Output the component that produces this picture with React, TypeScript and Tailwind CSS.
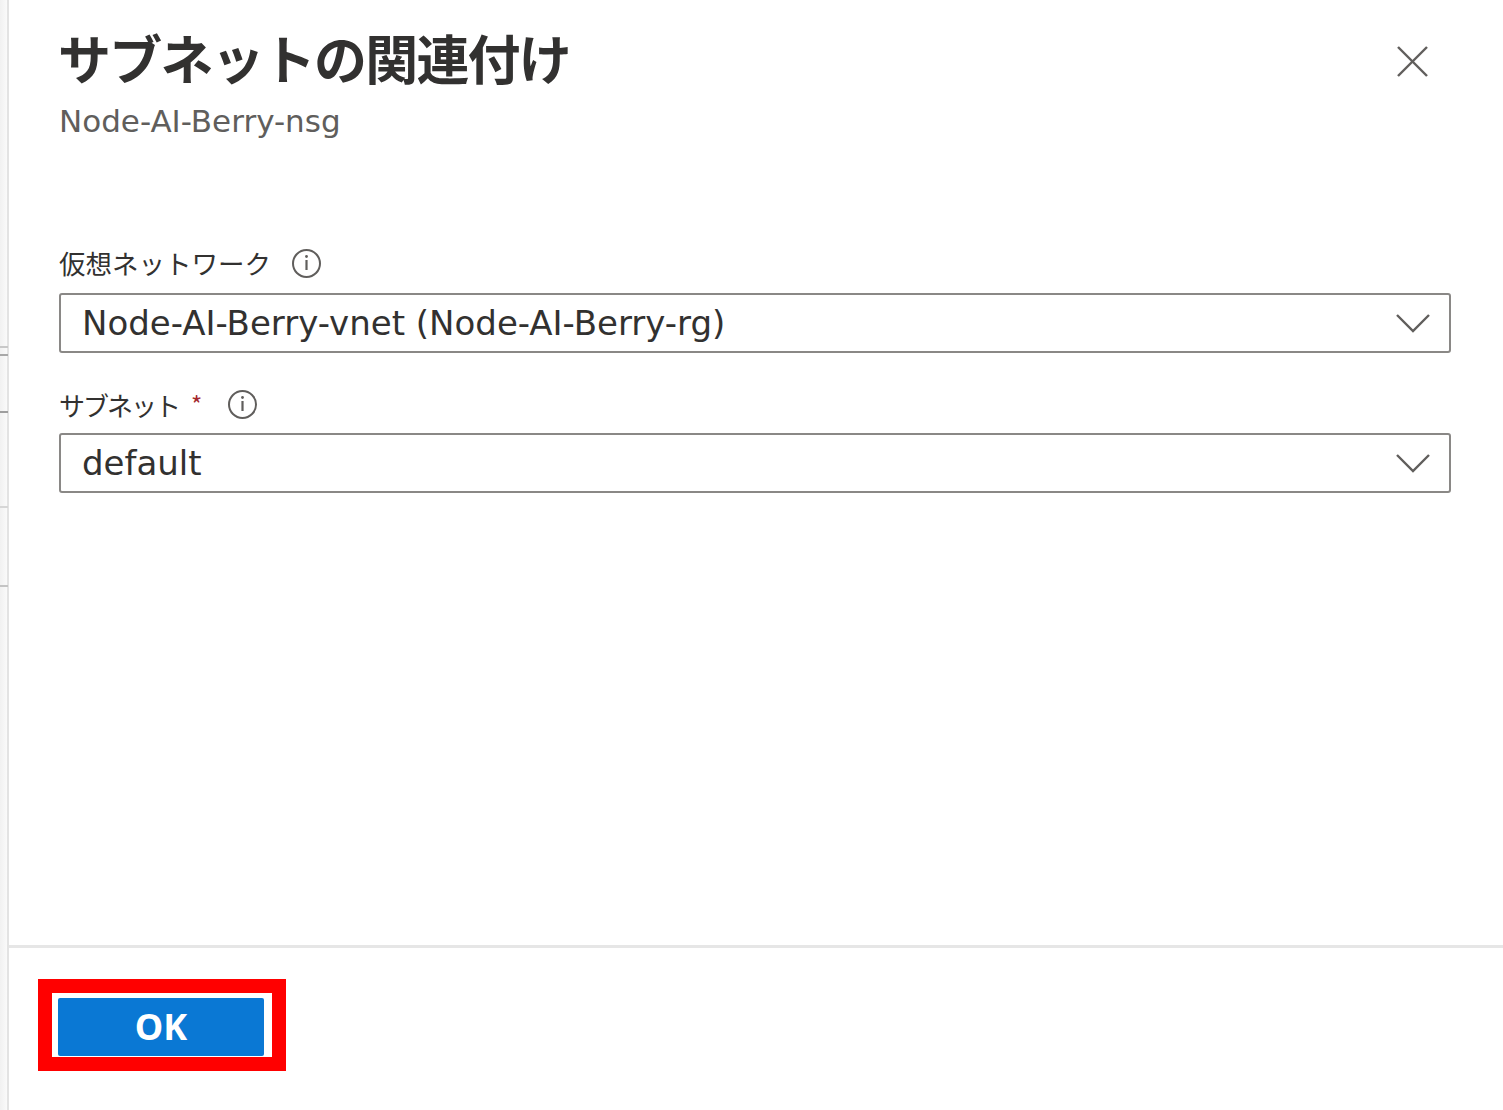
const jp = "font-['Noto_Sans_CJK_JP','DejaVu_Sans',sans-serif]";
const latin = "font-['DejaVu_Sans','Noto_Sans_CJK_JP',sans-serif]";

function InfoIcon() {
  return (
    <svg className="size-[31px] text-[#605e5c]" viewBox="0 0 31 31" fill="none">
      <circle cx="15.5" cy="15.5" r="13.5" stroke="currentColor" strokeWidth="2" />
      <line x1="15.5" y1="12" x2="15.5" y2="22" stroke="currentColor" strokeWidth="2.2" />
      <circle cx="15.5" cy="8.5" r="1.4" fill="currentColor" />
    </svg>
  );
}

function Chevron() {
  return (
    <svg className="h-[20px] w-[36px] text-[#605e5c]" viewBox="0 0 36 20" fill="none">
      <polyline points="2,2 18,18 34,2" stroke="currentColor" strokeWidth="2.4" />
    </svg>
  );
}

function Dropdown({ value }: { readonly value: string }) {
  return (
    <div className="flex h-[60px] items-center justify-between rounded-[3px] border-2 border-[#8a8886] bg-white pl-[21px] pr-[18px]">
      <span className={`${latin} text-[34px] leading-none text-[#323130]`}>{value}</span>
      <Chevron />
    </div>
  );
}

export default function App() {
  return (
    <div className="flex h-[1110px] w-[1503px] overflow-hidden bg-white">
      <div className="relative w-[9px] shrink-0 border-r-2 border-[#e3e3e3] bg-gradient-to-r from-[#f1f1f1] to-[#fafafa]">
        <div className="absolute left-0 top-[346px] h-[2px] w-[8px] bg-[#c8c8c8]" />
        <div className="absolute left-0 top-[354px] h-[2px] w-[8px] bg-[#a8a8a8]" />
        <div className="absolute left-0 top-[411px] h-[2px] w-[8px] bg-[#9e9e9e]" />
        <div className="absolute left-0 top-[506px] h-[2px] w-[8px] bg-[#d6d6d6]" />
        <div className="absolute left-0 top-[585px] h-[2px] w-[8px] bg-[#c4c4c4]" />
      </div>

      <div className="flex min-w-0 flex-1 flex-col">
        <header className="flex items-start justify-between pl-[49px] pr-[74px] pt-[25px]">
          <div>
            <h1 className={`${jp} text-[53px] font-semibold leading-[64px] tracking-[-1.8px] text-[#323130]`}>
              サブネットの関連付け
            </h1>
            <p className={`${latin} mt-[14px] pl-[1px] text-[31px] leading-[36px] text-[#605e5c]`}>
              Node-AI-Berry-nsg
            </p>
          </div>
          <button className="mt-[20px] text-[#605e5c]" type="button">
            <svg className="size-[33px]" viewBox="0 0 33 33" fill="none">
              <line x1="2" y1="2" x2="31" y2="31" stroke="currentColor" strokeWidth="2.4" />
              <line x1="31" y1="2" x2="2" y2="31" stroke="currentColor" strokeWidth="2.4" />
            </svg>
          </button>
        </header>

        <div className="mt-[106px] pl-[50px] pr-[52px]">
          <label className={`${jp} flex h-[36px] items-center gap-[20px] text-[26.5px] text-[#323130]`}>
            <span>仮想ネットワーク</span>
            <InfoIcon />
          </label>
          <div className="mt-[12px]">
            <Dropdown value="Node-AI-Berry-vnet (Node-AI-Berry-rg)" />
          </div>

          <label className={`${jp} mt-[33px] flex h-[36px] items-center text-[26px] text-[#323130]`}>
            <span className="tracking-[-2px]">サブネット</span>
            <span className="ml-[12px] text-[24px] text-[#a4262c]">*</span>
            <span className="ml-[25px] flex">
              <InfoIcon />
            </span>
          </label>
          <div className="mt-[11px]">
            <Dropdown value="default" />
          </div>
        </div>

        <div className="flex-1" />

        <footer className="h-[165px] border-t-[3px] border-[#e6e6e6] pl-[29px] pt-[31px]">
          <div className="inline-flex h-[92px] w-[248px] border-[14px] border-[#ff0000] pl-[6px] pt-[5px]">
            <button
              className="flex h-[58px] w-[206px] items-center justify-center rounded-[2px] bg-[#0a78d4] font-['Noto_Sans',sans-serif] text-[36px] font-bold text-white"
              type="button"
            >
              OK
            </button>
          </div>
        </footer>
      </div>
    </div>
  );
}
